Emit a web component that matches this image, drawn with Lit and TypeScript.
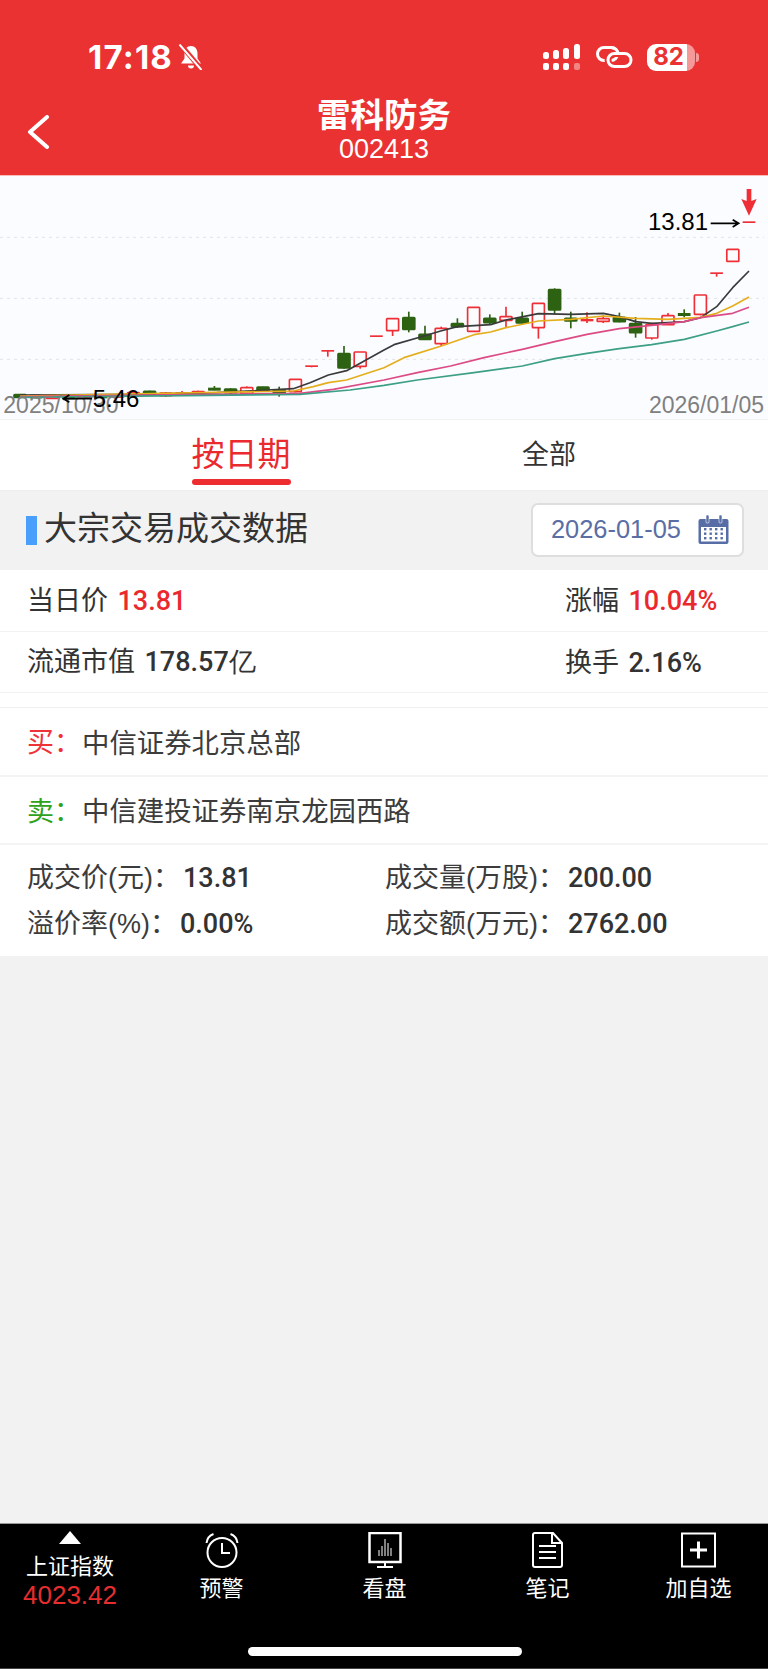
import { LitElement, css, html, svg } from 'lit'
import { customElement } from 'lit/decorators.js'

// candle data is in chart units (3 per css pixel): up/down, wick top, body top, body bottom, wick bottom
type Candle = [boolean, number, number, number, number]

const CANDLES: Candle[] = [
  [false, 655, 656, 664, 666],
  [false, 657, 658, 665, 667],
  [true, 657, 659, 667, 669],
  [false, 661, 662, 668, 670],
  [true, 659, 660, 666, 668],
  [false, 659, 660, 665, 667],
  [true, 657, 658, 664, 666],
  [true, 648, 650, 657, 660],
  [false, 644, 646, 656, 658],
  [true, 648, 651, 659, 663],
  [true, 645, 650, 653, 655],
  [true, 644, 647, 655, 657],
  [false, 630, 637, 642, 643],
  [false, 637, 639, 650, 655],
  [true, 631, 635, 652, 654],
  [false, 632, 633, 645, 647],
  [false, 632, 642, 650, 662],
  [true, 610, 610, 647, 649],
  [true, 570, 570, 570, 574],
  [true, 524, 524, 524, 542],
  [false, 510, 533, 576, 578],
  [true, 528, 528, 571, 578],
  [true, 480, 480, 480, 480],
  [true, 428, 428, 464, 480],
  [false, 407, 425, 460, 469],
  [false, 449, 475, 490, 492],
  [true, 452, 457, 503, 510],
  [false, 427, 443, 452, 456],
  [true, 394, 394, 466, 466],
  [false, 415, 427, 440, 445],
  [true, 392, 422, 433, 456],
  [false, 407, 427, 441, 445],
  [true, 382, 382, 455, 488],
  [false, 337, 341, 402, 415],
  [false, 407, 427, 435, 457],
  [true, 409, 431, 434, 441],
  [true, 418, 428, 436, 441],
  [false, 410, 424, 437, 439],
  [false, 423, 443, 470, 485],
  [true, 440, 446, 486, 491],
  [true, 411, 419, 446, 446],
  [false, 400, 413, 418, 424],
  [true, 357, 357, 415, 418],
  [true, 291, 291, 291, 302],
  [true, 220, 220, 256, 256],
  [true, 138, 138, 138, 138],
]

const R = 1152
const AVERAGES: { color: string; points: [number, number][] }[] = [
  {
    color: '#3a3a3a',
    points: [
      [60, 657], [400, 655], [650, 650], [880, 638], [930, 620], [985, 597], [1040, 584], [R, 522], [R + 30, 506],
      [R + 120, 480], [R + 170, 465], [R + 220, 452], [R + 320, 446], [R + 366, 432], [R + 463, 413], [R + 561, 415],
      [R + 658, 412], [R + 706, 422], [R + 755, 437], [R + 803, 442], [R + 852, 440], [R + 901, 437], [R + 950, 425],
      [R + 998, 392], [R + 1046, 335], [R + 1095, 285],
    ],
  },
  {
    color: '#e4ae1d',
    points: [
      [60, 660], [880, 645], [940, 632], [985, 620], [1040, 612], [R, 575], [R + 60, 545], [R + 172, 510],
      [R + 270, 476], [R + 320, 468], [R + 366, 455], [R + 463, 435], [R + 561, 430], [R + 658, 420], [R + 755, 427],
      [R + 852, 430], [R + 950, 424], [R + 998, 412], [R + 1046, 390], [R + 1095, 363],
    ],
  },
  {
    color: '#dc4b86',
    points: [
      [60, 662], [900, 652], [1000, 640], [R, 612], [R + 100, 590], [R + 200, 570], [R + 300, 545], [R + 415, 520],
      [R + 512, 497], [R + 609, 475], [R + 706, 458], [R + 803, 448], [R + 901, 437], [R + 950, 425], [R + 1046, 412],
      [R + 1095, 394],
    ],
  },
  {
    color: '#3c9f86',
    points: [
      [60, 664], [900, 655], [1050, 642], [R, 628], [R + 100, 612], [R + 270, 590], [R + 415, 570], [R + 512, 548],
      [R + 609, 532], [R + 706, 518], [R + 803, 506], [R + 901, 490], [R + 998, 465], [R + 1046, 452], [R + 1095, 438],
    ],
  },
]

@customElement('kline-chart')
export class KlineChart extends LitElement {
  static styles = css`
    :host {
      display: block;
    }
    svg {
      display: block;
    }
    .grid {
      stroke: #e2e3e6;
      stroke-width: 3;
      stroke-dasharray: 9 12;
    }
    .avg {
      fill: none;
      stroke-width: 5;
      stroke-linejoin: round;
    }
    .axis {
      font: 69px 'Liberation Sans', sans-serif;
      fill: #808080;
    }
    .price {
      font: 72px 'Liberation Sans', sans-serif;
      fill: #000;
    }
  `

  private candle(c: Candle, i: number) {
    const x = 60 + 48.6 * i
    const [up, wickTop, top, bottom, wickBottom] = c
    const color = up ? '#ee2f35' : '#2d6212'
    const flat = bottom - top < 7
    return svg`
      <line x1=${x} x2=${x} y1=${wickTop} y2=${wickBottom} stroke=${color} stroke-width="5" />
      ${flat
        ? svg`<rect x=${x - 19} y=${top - 2} width="38" height=${Math.max(bottom - top + 4, 5)} fill=${color} />`
        : svg`<rect x=${x - 18} y=${top} width="36" height=${bottom - top} rx="2"
            fill=${up ? '#fbfcff' : color} stroke=${color} stroke-width="5" />`}
    `
  }

  render() {
    return html`
      <svg width="768" height="244" viewBox="0 0 2304 732" role="img">
        ${[184, 367, 550].map((y) => svg`<line class="grid" x1="0" x2="2292" y1=${y} y2=${y} />`)}
        ${CANDLES.map((c, i) => this.candle(c, i))}
        ${AVERAGES.map(
          (a) => svg`<polyline class="avg" stroke=${a.color} points=${a.points.map((p) => p.join(',')).join(' ')} />`,
        )}
        <text class="axis" x="10" y="710">2025/10/30</text>
        <text class="axis" x="2292" y="710" text-anchor="end">2026/01/05</text>
        <path d="M192 668h84M208 657l-18 11 18 11" fill="none" stroke="#000" stroke-width="5" />
        <text class="price" x="278" y="692">5.46</text>
        <text class="price" x="1944" y="163">13.81</text>
        <path d="M2132 142h84M2198 131l18 11-18 11" fill="none" stroke="#000" stroke-width="5" />
        <path d="M2240 40h14v36l16-6-23 50-23-50 16 6z" fill="#ee2f35" transform="translate(0 -1)" />
      </svg>
    `
  }
}

@customElement('app-root')
export class AppRoot extends LitElement {
  static styles = css`
    :host {
      display: block;
      width: 768px;
      height: 1669px;
      background: #f2f2f2;
      color: #333;
      font-family: 'Liberation Sans', 'Noto Sans CJK SC', sans-serif;
    }
    .page {
      display: flex;
      flex-direction: column;
      height: 1669px;
    }
    .header {
      height: 175px;
      box-sizing: border-box;
      background: #ea3232;
      color: #fff;
    }
    .status {
      display: flex;
      align-items: center;
      height: 88px;
      padding: 26px 0 0 88px;
      box-sizing: border-box;
    }
    .time {
      font: 700 33px/1 Inter, sans-serif;
      letter-spacing: 1.2px;
      width: 90px;
    }
    .status-icons {
      display: flex;
      align-items: center;
      margin-left: auto;
      margin-right: 73px;
      gap: 14px;
    }
    .signal {
      display: block;
    }
    .battery {
      position: relative;
      display: flex;
      align-items: center;
      justify-content: center;
      width: 48px;
      height: 27px;
      border-radius: 9px;
      background: linear-gradient(90deg, #fff 83%, rgba(255, 255, 255, 0.5) 83%);
      color: #ea3232;
      font: 700 24px/1 Inter, sans-serif;
    }
    .battery span {
      margin-left: -5px;
    }
    .battery::after {
      content: '';
      position: absolute;
      right: -4px;
      top: 9px;
      width: 3px;
      height: 9px;
      border-radius: 0 3px 3px 0;
      background: rgba(255, 255, 255, 0.5);
    }
    .nav {
      display: grid;
      grid-template-columns: 1fr auto 1fr;
      align-items: center;
      height: 87px;
    }
    .back {
      display: block;
      margin-left: 27px;
    }
    .title {
      text-align: center;
    }
    .title b {
      display: block;
      font: 700 33.5px/38px 'Noto Sans CJK SC', sans-serif;
      margin-top: -6px;
      margin-bottom: 3px;
    }
    .title span {
      display: block;
      font-size: 27px;
      line-height: 29px;
    }
    .chart {
      height: 244px;
      box-sizing: border-box;
      background: #fbfcff;
      border-top: 1px solid #f8bcbc;
      overflow: hidden;
    }
    .tabs {
      display: grid;
      grid-template-columns: 308px 308px;
      padding-left: 87px;
      height: 72px;
      box-sizing: border-box;
      background: #fff;
      border-top: 1px solid #f0f0f0;
      border-bottom: 1px solid #eee;
    }
    .tab {
      display: flex;
      flex-direction: column;
      align-items: center;
      font-size: 27px;
      line-height: 70px;
      position: relative;
    }
    .tab.on {
      color: #ea2a2e;
      font-size: 33px;
    }
    .tab.on::after {
      content: '';
      position: absolute;
      left: 50%;
      bottom: 5px;
      width: 99px;
      height: 6px;
      margin-left: -49px;
      border-radius: 3px;
      background: #ee2d30;
    }
    .section {
      display: flex;
      align-items: center;
      height: 79px;
      padding: 0 24px 0 26px;
      box-sizing: border-box;
    }
    .mark {
      width: 11px;
      height: 29px;
      background: #4a9efc;
      margin-right: 7px;
    }
    .section h2 {
      margin: 0 0 4px;
      font-size: 33px;
      font-weight: 400;
      line-height: 1;
    }
    .date {
      display: flex;
      align-items: center;
      margin: 0 0 2px auto;
      width: 213px;
      height: 54px;
      box-sizing: border-box;
      padding: 0 13px 0 18px;
      background: #fff;
      border: 2px solid #dedede;
      border-radius: 7px;
      color: #5a6ea5;
      font-size: 25.4px;
    }
    .date svg {
      margin-left: auto;
    }
    .info {
      background: #fff;
    }
    .row {
      display: grid;
      grid-template-columns: 538px 1fr;
      align-items: center;
      box-sizing: border-box;
      height: 61px;
      padding: 0 0 4px 27px;
      font-size: 27px;
      border-bottom: 1px solid #f2f2f2;
    }
    .row.first {
      height: 62px;
    }
    .num {
      font-family: Roboto, 'Liberation Sans', sans-serif;
      font-weight: 500;
    }
    .row .num {
      margin-left: 2px;
    }
    .red {
      color: #e9292d;
    }
    .spacer {
      box-sizing: border-box;
      height: 15px;
      background: #fff;
      border-bottom: 1px solid #f0f0f0;
    }
    .broker {
      display: flex;
      align-items: center;
      box-sizing: border-box;
      height: 68px;
      padding: 0 0 2px 27px;
      font-size: 27.4px;
      color: #3c3c3c;
      border-bottom: 2px solid #f4f4f4;
    }
    .broker.first {
      height: 69px;
    }
    .broker i {
      font-style: normal;
      font-size: 27px;
      width: 55px;
    }
    .buy {
      color: #ee3238;
    }
    .sell {
      color: #2ea21a;
    }
    .detail {
      display: grid;
      grid-template-columns: 358px 1fr;
      padding: 10px 0 9px 27px;
      background: #fff;
      font-size: 27px;
      line-height: 46px;
      color: #3c3c3c;
    }
    .detail .num {
      color: #333;
      margin-left: 3px;
    }
    .grow {
      flex: 1;
    }
    .bar {
      height: 146px;
      box-sizing: border-box;
      position: relative;
      display: grid;
      grid-template-columns: 140px 163px 163px 163px 139px;
      background: #000;
      color: #fff;
      border-top: 1px solid #999;
      border-bottom: 1px solid #444;
    }
    .bar-item {
      display: flex;
      flex-direction: column;
      align-items: center;
      font-size: 22px;
      line-height: 30px;
      padding-top: 8px;
    }
    .bar-item svg {
      display: block;
      height: 36px;
      margin-bottom: 6px;
    }
    .index {
      padding-top: 7px;
    }
    .tri {
      width: 0;
      height: 0;
      border: 11px solid transparent;
      border-top: 0;
      border-bottom: 13px solid #fff;
      margin-bottom: 7px;
    }
    .index span {
      line-height: 31px;
    }
    .index b {
      color: #e62e2e;
      font-weight: 400;
      font-size: 26px;
      line-height: 26px;
    }
    .home {
      position: absolute;
      left: 248px;
      bottom: 12px;
      width: 274px;
      height: 9px;
      border-radius: 5px;
      background: #fff;
    }
  `

  private statusBar() {
    return html`
      <div class="status">
        <div class="time">17:18</div>
        <svg width="26" height="26" viewBox="0 0 26 26" fill="#fff">
          <path d="M13 2c-4 0-6.500 3-6.500 7.500v5l-3.500 5h20l-3.500-5v-5C19.500 5 17 2 13 2z" />
          <path d="M10 21.500a3 3 0 0 0 6 0z" />
          <path d="M2 0l22 26" stroke="#ea3232" stroke-width="5" />
          <path d="M1.500 0.500l22 25.500" stroke="#fff" stroke-width="2" />
        </svg>
        <div class="status-icons">
          <svg class="signal" width="39" height="27" viewBox="0 0 39 27" fill="#fff">
            <rect x="0" y="8" width="6" height="7" rx="2.500" />
            <rect x="10" y="6" width="6" height="9" rx="2.500" />
            <rect x="20" y="4" width="6" height="11" rx="2.500" />
            <rect x="31" y="0" width="6" height="15" rx="2.500" />
            <rect x="0" y="19" width="6" height="7" rx="2" />
            <rect x="10" y="19" width="6" height="7" rx="2" />
            <rect x="20" y="19" width="6" height="7" rx="2" />
            <rect x="31" y="19" width="6" height="7" rx="2" opacity="0.4" />
          </svg>
          <svg width="37" height="22" viewBox="0 0 37 22" fill="none">
            <rect x="1.500" y="1.500" width="20" height="13" rx="6.500" stroke="#fff" stroke-width="3" />
            <rect x="12" y="7.500" width="23" height="13" rx="6.500" stroke="#ea3232" stroke-width="7" />
            <rect x="12" y="7.500" width="23" height="13" rx="6.500" stroke="#fff" stroke-width="3" />
            <path d="M16 1.500h-1c4 0 7 3 7 6.500" stroke="#fff" stroke-width="3" />
          </svg>
          <div class="battery"><span>82</span></div>
        </div>
      </div>
    `
  }

  private calendarIcon() {
    return html`
      <svg width="31" height="29" viewBox="0 0 31 29" fill="#566da6">
        <path d="M2.500 4h26a2 2 0 0 1 2 2v21a2 2 0 0 1-2 2h-26a2 2 0 0 1-2-2V6a2 2 0 0 1 2-2zM3 12v14.500h25V12z" fill-rule="evenodd" />
        <rect x="8" y="0" width="3" height="8" rx="1" stroke="#fff" stroke-width="0.6" />
        <rect x="21" y="0" width="3" height="8" rx="1" stroke="#fff" stroke-width="0.6" />
        ${[7, 12.5, 18, 23.5].map((x) =>
          [14, 18.5, 23].map((y) => svg`<rect x=${x - 1} y=${y - 1} width="2.400" height="2.400" />`),
        )}
      </svg>
    `
  }

  private tabBar() {
    return html`
      <div class="bar">
        <div class="bar-item index">
          <div class="tri"></div>
          <span>上证指数</span>
          <b>4023.42</b>
        </div>
        <div class="bar-item">
          <svg width="36" height="36" viewBox="0 0 36 36" fill="none" stroke="#fff" stroke-width="2">
            <circle cx="18" cy="20.500" r="14.500" />
            <path d="M18 11v10h8" />
            <path d="M2.500 11c.5-4 3-7.500 7-9M33.500 11c-.5-4-3-7.500-7-9" />
          </svg>
          预警
        </div>
        <div class="bar-item">
          <svg width="34" height="36" viewBox="0 0 34 36" fill="none" stroke="#fff">
            <rect x="1.500" y="1" width="31" height="29" stroke-width="2.500" />
            <path d="M14 24V14M17 24V7M20 24V11M23 24V16M11 24v-6" stroke-width="1" />
            <path d="M17 31v3M9 35h16" stroke-width="2" />
          </svg>
          看盘
        </div>
        <div class="bar-item">
          <svg width="32" height="36" viewBox="0 0 32 36" fill="none" stroke="#fff" stroke-width="2">
            <path d="M3 1h18l9 10v22a2 2 0 0 1-2 2H3a2 2 0 0 1-2-2V3a2 2 0 0 1 2-2z" />
            <path d="M20 1v10h10" />
            <path d="M7 14h17M7 20h17M7 26h17" />
          </svg>
          笔记
        </div>
        <div class="bar-item">
          <svg width="35" height="36" viewBox="0 0 35 36" fill="none" stroke="#fff">
            <rect x="1" y="1.500" width="33" height="33" stroke-width="2" />
            <path d="M9 18h17M17.500 9.500v17" stroke-width="3" />
          </svg>
          加自选
        </div>
        <div class="home"></div>
      </div>
    `
  }

  render() {
    return html`
      <div class="page">
        <div class="header">
          ${this.statusBar()}
          <div class="nav">
            <svg class="back" width="24" height="34" viewBox="0 0 24 34" fill="none" stroke="#fff" stroke-width="4" stroke-linecap="round" stroke-linejoin="round">
              <path d="M20 2L3 17l17 15" />
            </svg>
            <div class="title"><b>雷科防务</b><span>002413</span></div>
            <div></div>
          </div>
        </div>
        <div class="chart"><kline-chart></kline-chart></div>
        <div class="tabs">
          <div class="tab on">按日期</div>
          <div class="tab">全部</div>
        </div>
        <div class="section">
          <div class="mark"></div>
          <h2>大宗交易成交数据</h2>
          <div class="date">2026-01-05 ${this.calendarIcon()}</div>
        </div>
        <div class="info">
          <div class="row first">
            <div>当日价 <span class="num red">13.81</span></div>
            <div>涨幅 <span class="num red">10.04%</span></div>
          </div>
          <div class="row">
            <div>流通市值 <span class="num">178.57亿</span></div>
            <div>换手 <span class="num">2.16%</span></div>
          </div>
          <div class="spacer"></div>
          <div class="broker first"><i class="buy">买：</i>中信证券北京总部</div>
          <div class="broker"><i class="sell">卖：</i>中信建投证券南京龙园西路</div>
          <div class="detail">
            <div>成交价(元)：<span class="num">13.81</span></div>
            <div>成交量(万股)：<span class="num">200.00</span></div>
            <div>溢价率(%)：<span class="num">0.00%</span></div>
            <div>成交额(万元)：<span class="num">2762.00</span></div>
          </div>
        </div>
        <div class="grow"></div>
        ${this.tabBar()}
      </div>
    `
  }
}
